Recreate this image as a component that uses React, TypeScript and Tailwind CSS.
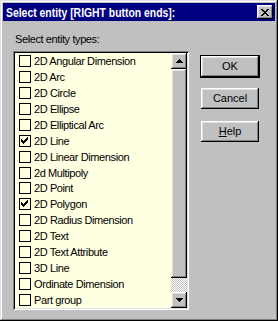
import React from "react";

const raised =
  "shadow-[inset_-1px_-1px_#000000,inset_1px_1px_#ffffff,inset_-2px_-2px_#808080,inset_2px_2px_#dfdfdf]";
const sunken =
  "shadow-[inset_1px_1px_#808080,inset_-1px_-1px_#ffffff,inset_2px_2px_#000000,inset_-2px_-2px_#dfdfdf]";

const items: { label: string; checked?: boolean }[] = [
  { label: "2D Angular Dimension" },
  { label: "2D Arc" },
  { label: "2D Circle" },
  { label: "2D Ellipse" },
  { label: "2D Elliptical Arc" },
  { label: "2D Line", checked: true },
  { label: "2D Linear Dimension" },
  { label: "2d Multipoly" },
  { label: "2D Point" },
  { label: "2D Polygon", checked: true },
  { label: "2D Radius Dimension" },
  { label: "2D Text" },
  { label: "2D Text Attribute" },
  { label: "3D Line" },
  { label: "Ordinate Dimension" },
  { label: "Part group" },
];

const CheckRow = ({ label, checked }: { label: string; checked?: boolean }) => (
  <div className="flex h-[16px] items-center pl-[4px]">
    <div className="flex h-[12px] w-[12px] shrink-0 items-center justify-center border border-black">
      {checked && (
        <svg width="8" height="8" viewBox="0 0 8 8" shapeRendering="crispEdges">
          <path
            d="M0 2h1v3H0zM1 3h1v3H1zM2 4h1v3H2zM3 3h1v3H3zM4 2h1v3H4zM5 1h1v3H5zM6 0h1v3H6z"
            fill="#000"
          />
        </svg>
      )}
    </div>
    <span className="ml-[3px] whitespace-nowrap text-[11px] leading-[14px] tracking-[-0.4px] text-black">
      {label}
    </span>
  </div>
);

const Arrow = ({ down }: { down?: boolean }) => (
  <svg width="7" height="4" viewBox="0 0 7 4" shapeRendering="crispEdges">
    <path
      d={down ? "M0 0h7v1H0zM1 1h5v1H1zM2 2h3v1H2zM3 3h1v1H3z" : "M3 0h1v1H3zM2 1h3v1H2zM1 2h5v1H1zM0 3h7v1H0z"}
      fill="#000"
    />
  </svg>
);

const PushButton = ({ children, isDefault }: { children: React.ReactNode; isDefault?: boolean }) => (
  <div className={isDefault ? "border border-black" : "border border-transparent"}>
    <div className={`flex h-[21px] w-[58px] items-center justify-center bg-[#c0c0c0] text-[11px] text-black ${raised}`}>
      {children}
    </div>
  </div>
);

export default function App() {
  return (
    <div className="flex h-[321px] w-[278px] flex-col bg-[#c0c0c0] p-[3px] font-['Liberation_Sans',Arial,sans-serif] shadow-[inset_-1px_-1px_#000000,inset_1px_1px_#dfdfdf,inset_-2px_-2px_#808080,inset_2px_2px_#ffffff]">
      <div className="flex h-[18px] shrink-0 items-center bg-[#000080] pl-[3px] pr-[2px]">
        <span className="origin-left scale-x-[0.8] text-[13px] font-bold leading-none whitespace-nowrap text-white">
          Select entity [RIGHT button ends]:
        </span>
        <div className={`ml-auto flex h-[14px] w-[16px] items-center justify-center bg-[#c0c0c0] ${raised}`}>
          <svg width="8" height="7" viewBox="0 0 8 7" shapeRendering="crispEdges">
            <path
              d="M0 0h2v1H0zM6 0h2v1H6zM1 1h2v1H1zM5 1h2v1H5zM2 2h4v1H2zM3 3h2v1H3zM2 4h4v1H2zM1 5h2v1H1zM5 5h2v1H5zM0 6h2v1H0zM6 6h2v1H6z"
              fill="#000"
            />
          </svg>
        </div>
      </div>

      <div className="flex pl-[10px]">
        <div className="flex flex-col">
          <div className="pl-[2px] pt-[12px] text-[11px] leading-[13px] tracking-[-0.4px] text-black">
            Select entity types:
          </div>
          <div className={`mt-[5px] flex h-[259px] w-[176px] bg-[#ffffe1] p-[2px] ${sunken}`}>
            <div className="flex flex-1 flex-col overflow-hidden">
              {items.map((it) => (
                <CheckRow key={it.label} label={it.label} checked={it.checked} />
              ))}
            </div>
            <div className="flex w-[16px] flex-col">
              <div className={`flex h-[16px] items-center justify-center bg-[#c0c0c0] ${raised}`}>
                <Arrow />
              </div>
              <div className={`h-[209px] bg-[#c0c0c0] ${raised}`} />
              <div className="h-[14px] bg-[repeating-conic-gradient(#c0c0c0_0%_25%,#ffffff_0%_50%)] bg-[length:2px_2px]" />
              <div className={`flex h-[16px] items-center justify-center bg-[#c0c0c0] ${raised}`}>
                <Arrow down />
              </div>
            </div>
          </div>
        </div>

        <div className="ml-[11px] flex flex-col pt-[34px]">
          <PushButton isDefault>OK</PushButton>
          <div className="mt-[9px]">
            <PushButton>Cancel</PushButton>
          </div>
          <div className="mt-[10px]">
            <PushButton>
              <span>
                <span className="underline">H</span>elp
              </span>
            </PushButton>
          </div>
        </div>
      </div>
    </div>
  );
}
